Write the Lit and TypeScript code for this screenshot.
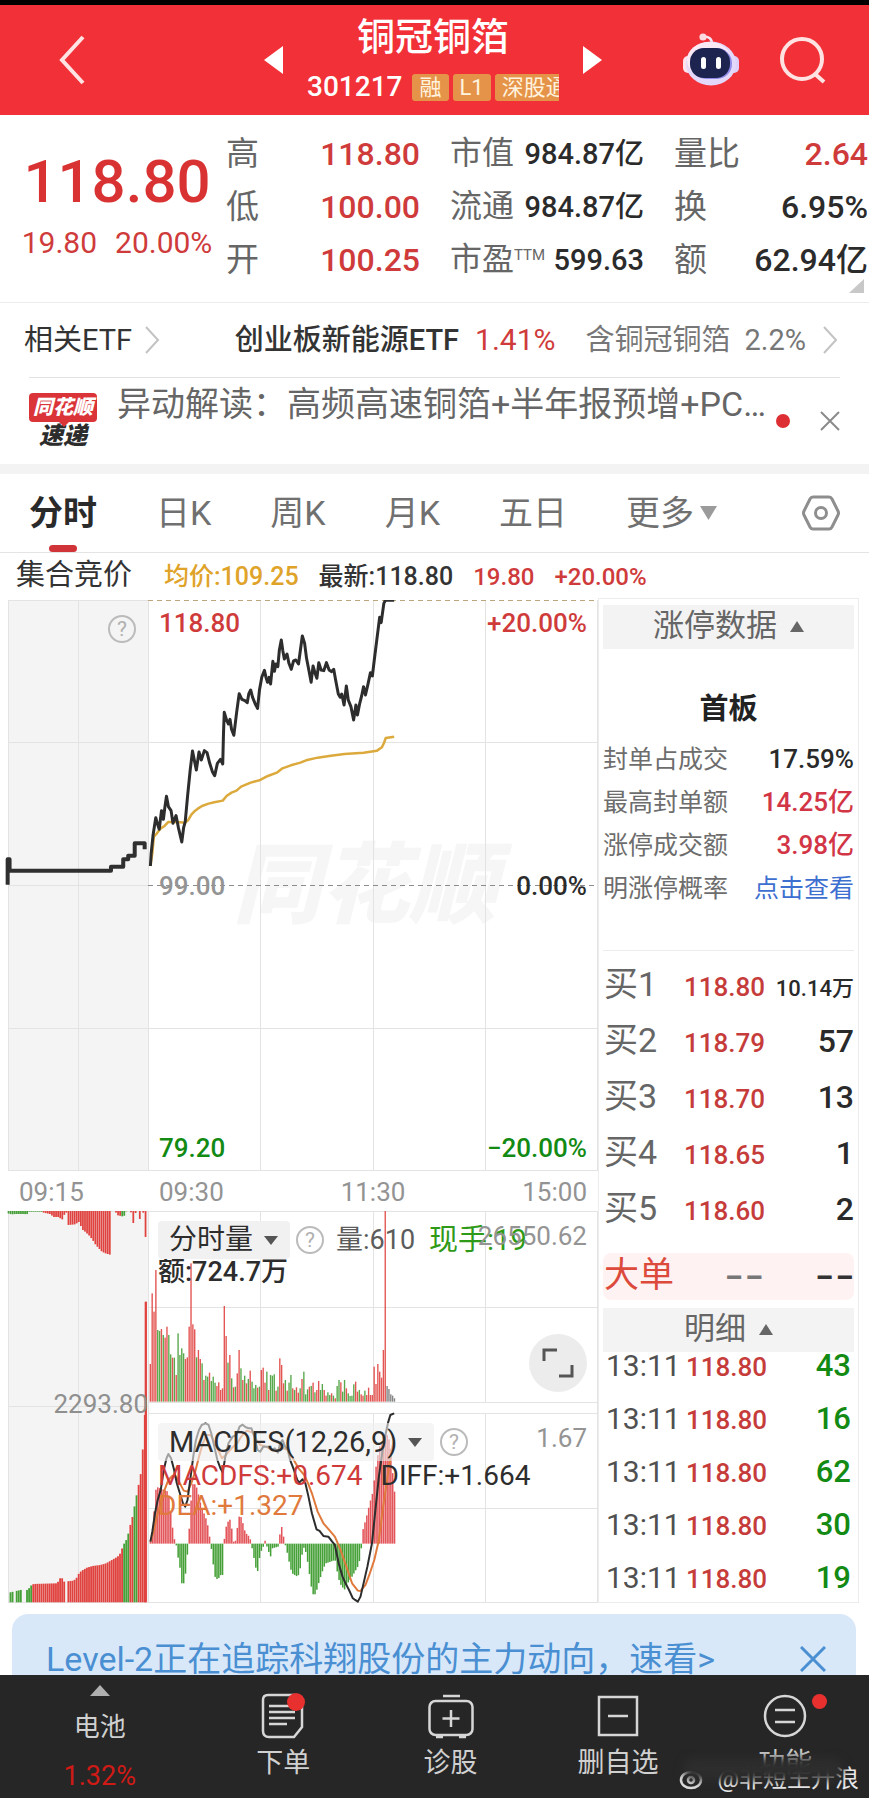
import { LitElement, html, svg, css } from "lit";
import { customElement, state } from "lit/decorators.js";

type Pt = [number, number];

const parse = (s: string): Pt[] =>
  s.trim().split(/\s+/).map((p) => p.split(",").map(Number) as Pt);

const at = (pts: Pt[], x: number): number => {
  for (let i = 1; i < pts.length; i++) {
    const [x0, y0] = pts[i - 1];
    const [x1, y1] = pts[i];
    if (x <= x1) return y0 + ((y1 - y0) * (x - x0)) / (x1 - x0);
  }
  return pts[pts.length - 1][1];
};

const PRICE = `393,828 395,790 400,735 407,683 411,700 416,718 422,662 427,688 431,650 435,619 440,650 447,662 452,700 460,677 466,712 475,756 480,712 484,695 490,620 497,540 503,483 508,512 513,540 520,486 526,510 534,482 541,488 548,520 555,545 561,557 568,520 576,508 582,522 584,430 586,367 592,390 597,402 601,388 605,418 611,436 618,370 625,311 632,328 640,332 646,338 650,312 655,300 660,322 667,342 673,355 678,300 684,262 691,241 695,262 699,277 703,262 707,282 713,214 717,244 721,222 726,230 730,180 735,150 739,182 743,207 750,192 755,220 761,238 767,213 773,210 780,222 785,180 790,138 796,160 801,205 807,240 813,277 818,228 823,248 828,265 833,218 839,240 846,242 853,218 860,240 866,245 872,238 877,270 884,312 889,322 893,312 899,345 905,288 910,330 917,350 924,390 930,345 934,375 940,340 945,318 950,290 955,315 962,280 968,248 973,258 978,210 984,155 992,82 996,98 1003,40 1007,31 1030,31`;
const AVERAGE = `393,828 398,790 402,740 410,730 420,715 430,708 440,696 455,696 470,697 484,698 492,690 500,674 508,664 517,656 528,648 545,641 560,637 582,632 592,618 605,608 618,602 630,590 655,578 680,570 700,558 725,547 738,535 760,526 785,518 800,511 830,503 860,498 900,492 950,488 985,482 998,472 1003,460 1008,444 1030,440`;
const AUCTION = `20,884 20,808 25,808 25,842 290,842 290,830 322,830 322,808 335,808 335,797 352,797 352,760 378,760 378,778`;

const VOLUME = `492r 280r 335r 210r 390g 393g 387r 405g 413r 380r 405g 463g 473r 473g 525r 400g 465g 445g 460g 477r 472r 380r 190r 373r 388r 472g 450r 477r 490g 540r 527g 530g 518r 543g 530g 548g 558r 547r 570r 565r 318r 408r 488g 465r 535g 562r 560g 520r 450r 505g 540r 527g 550r 537g 512r 545g 565g 555g 563r 560g 510r 503r 548r 515g 570r 525g 527g 523g 572r 560g 475r 495r 550r 540g 572r 548g 525g 565r 570g 562r 578r 565g 537r 515g 583g 568g 560r 558g 548r 577g 570r 543r 570g 552g 570r 587r 577g 585g 580r 587g 595r 558g 540g 547r 575g 540g 565r 580g 588g 587g 553g 545r 575r 570g 583r 587r 572g 585r 563r 585r 585r 500r 552r 492r 515r 533r 450r 33r 558k 567k 583k 587k 595k`.split(" ");

const HANG = parse(`20,7 30,10 41,9 52,9 63,9 70,10 76,2 108,2 114,5 130,9 142,19 150,17 165,27 169,5 174,5 178,42 196,40 207,32 214,55 222,62 234,75 243,89 250,102 258,112 266,122 275,127 290,132 292,0 302,0 304,12 312,14 322,17 328,10 330,0`);
const LADDER = parse(`25,1144 52,1137 70,1137 80,1122 86,1119 148,1117 152,1102 160,1102 165,1112 190,1109 197,1102 203,1089 210,1080 225,1070 240,1065 260,1062 275,1057 290,1047 305,1037 312,1027 320,1002 330,982 337,947 345,912 352,867 358,832 365,792 370,727 376,612`);
const HIST = parse(`393,425 398,395 403,330 407,270 412,262 440,275 445,320 450,375 455,415 460,431 465,470 470,500 475,550 480,550 485,520 490,460 492,431 494,395 500,290 505,245 515,265 520,290 527,325 535,345 541,365 546,395 550,431 553,450 558,500 563,537 570,537 577,525 582,525 585,440 587,405 592,375 600,355 605,380 610,425 615,425 620,385 625,350 632,352 637,385 643,400 653,412 656,430 658,440 663,470 668,500 672,525 677,480 682,455 688,440 692,420 697,438 702,455 707,470 712,445 727,440 731,405 736,380 741,410 744,428 748,445 753,470 758,500 763,520 777,530 783,520 788,470 795,440 800,460 806,500 812,550 817,583 825,583 830,560 838,530 845,505 852,490 876,480 882,520 888,550 900,570 905,555 915,540 925,520 935,500 940,480 944,445 947,395 953,370 960,340 967,305 972,290 978,240 985,180 992,140 1000,115 1008,100 1015,110 1022,150 1028,250 1031,275`);
const DIFF = `393,425 398,395 405,340 412,300 420,270 428,210 435,175 440,162 447,175 455,210 462,250 470,280 478,310 484,320 490,300 497,240 505,170 512,120 520,90 527,75 537,70 545,75 552,100 560,140 568,180 576,205 582,218 588,175 597,130 608,110 618,105 626,80 634,74 642,82 650,85 657,85 665,110 673,150 680,155 688,140 700,140 710,150 718,145 726,158 732,130 738,120 745,140 752,150 758,180 768,210 777,240 782,248 790,238 798,250 806,290 815,340 827,388 835,393 845,408 858,410 868,425 875,435 885,490 895,530 902,548 912,570 922,595 928,600 935,605 942,590 948,560 960,500 972,430 980,340 990,230 1000,150 1008,100 1014,68 1020,45 1030,40`;
const DEA = `393,425 400,400 410,350 420,310 430,270 440,240 450,228 460,230 470,250 480,272 490,275 500,250 510,215 520,170 530,130 540,105 550,105 560,125 570,150 580,175 590,165 605,145 620,130 630,110 645,92 660,98 670,120 680,135 695,140 710,150 725,150 740,145 752,150 765,175 780,205 795,225 805,250 815,280 830,335 845,370 860,390 875,410 890,450 905,500 920,550 935,572 942,573 955,555 965,525 978,480 990,420 1000,330 1010,250 1018,190 1025,140 1030,120`;

const RED = "#e0433f";
const GREEN = "#46a038";

const shared = css`
  :host { display: block; }
  * { box-sizing: border-box; }
  button { font: inherit; color: inherit; background: none; border: 0; padding: 0; margin: 0; cursor: pointer; }
  a { color: inherit; text-decoration: none; }
  svg { display: block; }
  .red { color: #cf3b3b; }
  .green { color: #138a13; }
`;

@customElement("stock-header")
class StockHeader extends LitElement {
  static styles = [shared, css`
    header { display: grid; grid-template-columns: 1fr auto 1fr; align-items: stretch; height: 115px; background: #f23038; border-top: 5px solid #050000; color: #fff; }
    .side { display: flex; align-items: center; }
    .left { padding-left: 58px; }
    .right { justify-content: flex-end; gap: 40px; padding-right: 42px; }
    .mid { display: flex; align-items: center; justify-content: space-between; width: 338px; margin-right: 3px; }
    .name { display: flex; flex-direction: column; align-items: center; justify-content: flex-start; width: 252px; height: 110px; padding-top: 10px; }
    h1 { margin: 0; font-size: 38px; line-height: 44px; font-weight: 500; }
    .sub { display: flex; align-items: center; gap: 4px; width: 100%; height: 56px; overflow: hidden; white-space: nowrap; }
    .code { font-size: 28px; line-height: 32px; margin-right: 6px; font-weight: 500; }
    .tag { flex: none; background: #e6934a; color: #fff3df; font-size: 22px; line-height: 27px; padding: 0 7px; border-radius: 3px; }
  `];
  render() {
    return html`<header>
      <div class="side left">
        <button aria-label="返回"><svg width="28" height="50" viewBox="0 0 28 50"><path d="M25 2 4 25 25 48" fill="none" stroke="#ffe3e3" stroke-width="4"/></svg></button>
      </div>
      <div class="mid">
        <button aria-label="上一只"><svg width="19" height="28"><path d="M19 0v28L0 14z" fill="#fff"/></svg></button>
        <div class="name">
          <h1>铜冠铜箔</h1>
          <div class="sub"><span class="code">301217</span><span class="tag">融</span><span class="tag">L1</span><span class="tag">深股通</span></div>
        </div>
        <button aria-label="下一只"><svg width="19" height="28"><path d="M0 0v28l19-14z" fill="#fff"/></svg></button>
      </div>
      <div class="side right">
        <button aria-label="智能助手">
          <svg width="58" height="54" viewBox="0 0 58 54">
            <path d="M21 4c6-1 9 2 9 7" fill="none" stroke="#f3e6f4" stroke-width="2.5"/><circle cx="21" cy="4" r="3.6" fill="#ffd9e2"/>
            <rect x="1" y="23" width="10" height="17" rx="5" fill="#ffe4ee"/><rect x="47" y="23" width="10" height="17" rx="5" fill="#ddd0fb"/>
            <ellipse cx="29" cy="30.500" rx="25" ry="22" fill="#e4d8fa"/>
            <ellipse cx="27" cy="27" rx="22" ry="18" fill="#fbeaf6"/>
            <rect x="9" y="15" width="41" height="31" rx="15" fill="#8f8be8"/>
            <rect x="8" y="15" width="40" height="30" rx="14" fill="#1d2450"/>
            <rect x="19" y="24" width="5" height="12" rx="2.500" fill="#fff"/><rect x="34" y="24" width="5" height="12" rx="2.500" fill="#fff"/>
          </svg>
        </button>
        <button aria-label="搜索"><svg width="47" height="47" viewBox="0 0 47 47"><circle cx="22" cy="22" r="20" fill="none" stroke="#ffe3e3" stroke-width="4"/><path d="m35 37 9 8" stroke="#ffe3e3" stroke-width="4"/></svg></button>
      </div>
    </header>`;
  }
}

@customElement("stock-stats")
class StockStats extends LitElement {
  static styles = [shared, css`
    .stats { display: flex; padding-right: 1px; height: 188px; border-bottom: 1px solid #ececec; position: relative; }
    .quote { width: 226px; padding: 32px 10px 0 18px; text-align: center; color: #d93232; }
    .price { font-size: 60px; line-height: 70px; font-weight: 500; }
    .chg { display: flex; justify-content: center; gap: 18px; font-size: 30px; line-height: 52px; color: #cf3b3b; }
    .cols { flex: 1; display: grid; grid-template-columns: repeat(3, 1fr); column-gap: 30px; padding-top: 12px; align-content: start; }
    .cell { display: flex; justify-content: space-between; align-items: baseline; height: 53px; line-height: 53px; white-space: nowrap; font-size: 32px; font-weight: 500; color: #2b2b2b; }
    .cell.small { font-size: 29px; }
    .cell .k { font-size: 33px; font-weight: 400; color: #666; display: flex; }
    .small .k { font-size: 32px; }
    .cell sup { font-size: 15px; line-height: 44px; }
    .cell.red { color: #cf3b3b; }
    .corner { position: absolute; right: 5px; bottom: 9px; }
  `];
  render() {
    const cell = (k: unknown, v: string, cls = "") =>
      html`<div class="cell ${cls}"><span class="k">${k}</span><span>${v}</span></div>`;
    return html`<section class="stats">
      <div class="quote"><div class="price">118.80</div><div class="chg"><span>19.80</span><span>20.00%</span></div></div>
      <div class="cols">
        ${cell("高", "118.80", "red")}${cell("市值", "984.87亿", "small")}${cell("量比", "2.64", "red")}
        ${cell("低", "100.00", "red")}${cell("流通", "984.87亿", "small")}${cell("换", "6.95%")}
        ${cell("开", "100.25", "red")}${cell(html`市盈<sup>TTM</sup>`, "599.63", "small")}${cell("额", "62.94亿")}
      </div>
      <svg class="corner" width="15" height="14"><path d="M15 0v14H0z" fill="#c8c8c8"/></svg>
    </section>`;
  }
}

@customElement("stock-news")
class StockNews extends LitElement {
  static styles = [shared, css`
    .etf { display: flex; align-items: center; height: 74px; line-height: 74px; padding: 0 31px 0 24px; font-size: 29px; color: #333; white-space: nowrap; }
    .related { display: flex; align-items: center; gap: 12px; }
    .fund { display: flex; align-items: center; margin-left: auto; }
    .fund b { font-weight: 500; margin-right: 16px; }
    .fund .red { font-size: 30px; margin-right: 30px; }
    .fund .has { color: #777; margin-right: 16px; display: flex; gap: 14px; }
    .news { display: flex; align-items: center; height: 87px; margin: 0 29px; border-top: 1px solid #e2e2e2; }
    .logo { width: 68px; margin: 0 20px 0 0; padding-top: 2px; }
    .logo .top { position: relative; background: #da3338; color: #fff; font-size: 20px; line-height: 29px; font-weight: 900; font-style: italic; text-align: center; border-radius: 4px; }
    .logo .top::after { content: ""; position: absolute; left: 30px; top: 29px; border: 5px solid transparent; border-top-color: #da3338; }
    .logo .bot { color: #2c2c2c; font-size: 24px; line-height: 29px; font-weight: 900; font-style: italic; text-align: center; }
    .text { flex: 1; min-width: 0; font-size: 34px; line-height: 48px; color: #666; overflow: hidden; text-overflow: ellipsis; white-space: nowrap; margin-bottom: 34px; }
    .dot { width: 14px; height: 14px; border-radius: 50%; background: #dd2f33; margin: 0 30px 0 8px; }
    .gap { height: 10px; background: #f3f3f3; }
  `];
  render() {
    const arrow = html`<svg width="16" height="28" viewBox="0 0 16 28"><path d="M2 1 14 14 2 27" fill="none" stroke="#c3c3c3" stroke-width="2"/></svg>`;
    return html`
      <div class="etf">
        <a class="related" href="#etf">相关ETF ${arrow}</a>
        <a class="fund" href="#fund"><b>创业板新能源ETF</b><span class="red">1.41%</span><span class="has"><span>含铜冠铜箔</span><span>2.2%</span></span>${arrow}</a>
      </div>
      <div class="news">
        <div class="logo"><div class="top">同花顺</div><div class="bot">速递</div></div>
        <a class="text" href="#news">异动解读：高频高速铜箔+半年报预增+PC...</a>
        <span class="dot"></span>
        <button aria-label="关闭"><svg width="20" height="20"><path d="m1 1 18 18M19 1 1 19" stroke="#8a8a8a" stroke-width="2"/></svg></button>
      </div>
      <div class="gap"></div>`;
  }
}

@customElement("chart-tabs")
class ChartTabs extends LitElement {
  static styles = [shared, css`
    nav { display: flex; align-items: center; height: 79px; padding: 0 29px; border-bottom: 1px solid #e4e4e4; font-size: 34px; color: #707070; }
    button { position: relative; display: flex; align-items: center; height: 78px; line-height: 78px; margin-right: 59px; white-space: nowrap; }
    button.on { color: #2a2a2a; font-weight: 700; }
    button.on::after { content: ""; position: absolute; left: 50%; bottom: 0; width: 28px; height: 7px; margin-left: -14px; border-radius: 4px; background: #d03438; }
    .more { gap: 6px; }
    .set { margin: 0 0 0 auto; }
    .info { display: flex; height: 45px; line-height: 45px; align-items: baseline; padding-left: 16px; font-size: 25px; font-weight: 500; color: #333; white-space: nowrap; }
    .info .auc { font-size: 29px; font-weight: 400; margin-right: 32px; }
    .info .avg { color: #dfa32a; margin-right: 20px; }
    .info .red { font-size: 24px; margin-left: 20px; }
  `];
  @state() active = 0;
  render() {
    const tabs = ["分时", "日K", "周K", "月K", "五日"];
    return html`<nav>
      ${tabs.map((t, i) => html`<button class=${i === this.active ? "on" : ""} @click=${() => (this.active = i)}>${t}</button>`)}
      <button class="more">更多<svg width="17" height="14"><path d="M0 0h17L8.500 14z" fill="#9b9b9b"/></svg></button>
      <button class="set" aria-label="设置"><svg width="38" height="36" viewBox="0 0 38 36"><path d="M11 2h16q2 0 3 2l6 12q1 2 0 4l-6 12q-1 2-3 2H11q-2 0-3-2L2 20q-1-2 0-4L8 4q1-2 3-2z" fill="none" stroke="#8e8e8e" stroke-width="3"/><circle cx="19" cy="18" r="5.500" fill="none" stroke="#8e8e8e" stroke-width="3"/></svg></button>
    </nav>
    <div class="info"><span class="auc">集合竞价</span><span class="avg">均价:109.25</span><span>最新:118.80</span><span class="red">19.80</span><span class="red">+20.00%</span></div>`;
  }
}

@customElement("intraday-chart")
class IntradayChart extends LitElement {
  static styles = [shared, css`
    :host { padding-top: 2px; font-size: 26px; font-weight: 500; }
    .plot { display: grid; grid-template-columns: 148fr 450fr; }
    .plot > svg { grid-area: 1 / 1 / 2 / 3; width: 100%; }
    .pre { grid-area: 1 / 1; display: flex; justify-content: flex-end; padding: 15px 12px 0 0; }
    .labels { grid-area: 1 / 2; display: grid; grid-template-columns: 1fr 1fr; align-content: space-between; padding: 8px 11px 8px 11px; line-height: 30px; z-index: 1; }
    .labels :nth-child(even) { text-align: right; }
    .grey { color: #949494; }
    .mark { grid-area: 1 / 2; place-self: center; padding-right: 16px; font-size: 88px; line-height: 90px; font-weight: 900; font-style: italic; color: #f6f6f6; }
    .times { display: grid; grid-template-columns: 148fr 450fr; height: 40px; line-height: 42px; color: #939393; font-weight: 400; }
    .times > :first-child { padding-left: 19px; }
    .times div { display: flex; justify-content: space-between; padding: 0 11px; }
    .q { display: block; width: 28px; height: 28px; border: 2px solid #bbb; border-radius: 50%; color: #b0b0b0; font-size: 21px; line-height: 24px; text-align: center; font-weight: 400; }
    .mid { grid-area: 1 / 1; display: flex; justify-content: flex-end; align-items: center; padding-bottom: 6px; color: #8f8f8f; font-weight: 400; z-index: 1; }
    .subs { grid-area: 1 / 2; position: relative; padding: 10px 11px 0 10px; z-index: 1; font-weight: 400; white-space: nowrap; }
    .line { display: flex; align-items: center; height: 38px; line-height: 38px; }
    .sel { position: relative; display: flex; align-items: center; height: 38px; background: rgba(238, 238, 238, 0.6); border-radius: 4px; margin-right: 6px; }
    .sel.solid { background: #f1f1f1; }
    .sel select { appearance: none; border: 0; background: transparent; font: inherit; font-size: 28px; color: #2d2d2d; padding: 0 36px 0 11px; height: 38px; margin: 0; }
    .sel.wide select { font-size: 29px; }
    .sel svg { position: absolute; right: 12px; pointer-events: none; }
    .vol { font-size: 27px; color: #5c5c5c; margin-left: 12px; }
    .now { font-size: 29px; color: #2f9a17; margin-left: 14px; }
    .max { position: absolute; right: 11px; top: 10px; line-height: 30px; color: #949494; }
    .amt { font-size: 27px; line-height: 26px; color: #2d2d2d; font-weight: 500; }
    .full { position: absolute; right: 11px; top: 123px; width: 58px; height: 58px; border-radius: 50%; background: #ececec; display: grid; place-items: center; }
    .macd { position: absolute; left: 10px; right: 11px; top: 212px; font-size: 28px; }
    .macd .val { position: absolute; right: 0; top: 0; font-size: 26px; line-height: 30px; color: #949494; }
    .macd .row { line-height: 30px; color: #2d2d2d; display: flex; gap: 18px; }
    .macd .row.dea { color: #e07a3c; }
    .grid { stroke: #e3e3e3; stroke-width: 1; fill: none; vector-effect: non-scaling-stroke; }
    .ln { fill: none; vector-effect: non-scaling-stroke; stroke-linejoin: round; }
  `];

  private bars() {
    const step = 638 / (VOLUME.length - 1);
    const color: Record<string, string> = { r: RED, g: GREEN, k: "#777" };
    const out = [];
    VOLUME.forEach((v, i) => {
      const y = parseInt(v, 10) - 33;
      out.push(svg`<rect x=${391 + i * step} y=${y} width="3.6" height=${572 - y} fill=${color[v.slice(-1)]} opacity=".9"/>`);
    });
    for (let i = 0; i < VOLUME.length; i++) {
      const x = 393 + i * step;
      const y = at(HIST, x);
      out.push(svg`<rect x=${x - 2} y=${Math.min(y, 431) + 567} width="4" height=${Math.abs(431 - y)} fill=${y < 431 ? "#e3555a" : GREEN}/>`);
    }
    for (let x = 20; x < 330; x += 5.4) {
      const h = at(HANG, x + 2);
      if (h > 0) out.push(svg`<rect x=${x} y="0" width="4.6" height=${h} fill=${x < 108 || x > 316 ? GREEN : RED}/>`);
    }
    for (const [x, h] of [[340, 4], [346, 36], [352, 6], [363, 24], [372, 5], [378, 78]]) {
      out.push(svg`<rect x=${x} y="0" width="4.6" height=${h} fill=${RED}/>`);
    }
    for (let x = 25; x < 376; x += 5.4) {
      if ((x > 34 && x < 40) || (x > 55 && x < 63) || (x > 168 && x < 174)) continue;
      const y = at(LADDER, x);
      const green = x < 82 || (x > 318 && x < 336) || (x > 345 && x < 356);
      out.push(svg`<rect x=${x} y=${y} width="4.8" height=${1174 - y} fill=${green ? GREEN : RED}/>`);
    }
    out.push(svg`<rect x="378" y="272" width="6" height="902" fill=${RED}/>`);
    return out;
  }

  render() {
    const cols = [78, 148, 260, 373, 485];
    const tri = html`<svg width="14" height="9"><path d="M0 0h14L7 9z" fill="#555"/></svg>`;
    return html`
      <div class="plot">
        <svg height="571" viewBox="0 0 598 571" preserveAspectRatio="none">
          <rect x="8" y="0" width="140" height="571" fill="#f4f4f4"/>
        </svg>
        <div class="mark">同花顺</div>
        <svg height="571" viewBox="0 0 598 571" preserveAspectRatio="none">
          <path class="grid" d="M8.500.5V571M8 .5h140M8 142.500h589M8 285.500h140M8 428.500h589M8 570.500h589M597.500 0v571"/>
          ${cols.map((x) => svg`<path class="grid" d="M${x + 0.5} 0V571"/>`)}
          <path class="ln" d="M148 .5h449" stroke="#bda57c" stroke-dasharray="5 4"/>
          <path class="ln" d="M148 285.500h449" stroke="#8c8c8c" stroke-dasharray="5 4"/>
          <g transform="scale(.3827 .3333) translate(0 -30)">
            <polyline class="ln" points=${AVERAGE} stroke="#dca93c" stroke-width="2.5"/>
            <polyline class="ln" points=${AUCTION} stroke="#2f2f2f" stroke-width="4"/>
            <polyline class="ln" points=${PRICE} stroke="#2d2d2d" stroke-width="3"/>
          </g>
        </svg>
        <div class="pre"><button class="q" aria-label="说明">?</button></div>
        <div class="labels">
          <span class="red">118.80</span><span class="red">+20.00%</span>
          <span class="grey">99.00</span><span>0.00%</span>
          <span class="green">79.20</span><span class="green">−20.00%</span>
        </div>
      </div>
      <div class="times"><span>09:15</span><div><span>09:30</span><span>11:30</span><span>15:00</span></div></div>
      <div class="plot">
        <svg height="392" viewBox="0 0 598 392" preserveAspectRatio="none">
          <rect x="8" y="0" width="140" height="391" fill="#f4f4f4"/>
          <path class="grid" d="M8 .5h589M148 96.500h449M148 191.500h449M148 202.500h449M148 297.500h449M8 391.500h589M8 195.500h140M8.500 0v392M597.500 0v392"/>
          ${cols.map((x) => svg`<path class="grid" d="M${x + 0.5} 0V392"/>`)}
          <rect x="149" y="192" width="448" height="10" fill="#fff"/>
          <g transform="scale(.3827 .3333)">
            ${this.bars()}
            <g transform="translate(0 567)">
              <polyline class="ln" points=${DEA} stroke="#e07a3c" stroke-width="2"/>
              <polyline class="ln" points=${DIFF} stroke="#2d2d2d" stroke-width="2"/>
            </g>
          </g>
        </svg>
        <div class="mid">2293.80</div>
        <div class="subs">
          <div class="line">
            <label class="sel solid"><select aria-label="副图指标一"><option>分时量</option></select>${tri}</label>
            <button class="q" aria-label="说明">?</button>
            <span class="vol">量:610</span><span class="now">现手:19</span>
          </div>
          <div class="amt">额:724.7万</div>
          <span class="max">26550.62</span>
          <button class="full" aria-label="全屏"><svg width="32" height="30"><path d="M2 13V2h13M17 28h13V17" fill="none" stroke="#555" stroke-width="3"/></svg></button>
          <div class="macd">
            <div class="line">
              <label class="sel wide"><select aria-label="副图指标二"><option>MACDFS(12,26,9)</option></select>${tri}</label>
              <button class="q" aria-label="说明">?</button>
            </div>
            <span class="val">1.67</span>
            <div class="row"><span class="red">MACDFS:+0.674</span><span>DIFF:+1.664</span></div>
            <div class="row dea">DEA:+1.327</div>
          </div>
        </div>
      </div>`;
  }
}

@customElement("order-panel")
class OrderPanel extends LitElement {
  static styles = [shared, css`
    aside { height: 100%; padding: 6px 4px 10px; border: 1px solid #ececec; display: flex; flex-direction: column; white-space: nowrap; }
    .head { display: flex; align-items: center; justify-content: center; gap: 13px; height: 44px; line-height: 42px; padding-bottom: 2px; width: 100%; background: #f3f3f3; font-size: 31px; color: #666; }
    h2 { margin: 40px 0 9px; font-size: 29px; line-height: 40px; text-align: center; color: #222; }
    .row { display: flex; justify-content: space-between; align-items: baseline; height: 43px; line-height: 43px; font-size: 25px; color: #6d6d6d; }
    .row b { font-size: 26px; font-weight: 500; color: #2a2a2a; }
    .row b.red { color: #d23545; }
    .row a { color: #3d6fd0; }
    hr { width: 100%; border: 0; border-top: 1px solid #ececec; margin: 40px 0 5px; }
    .buy { display: grid; grid-template-columns: 80px auto 1fr; align-items: baseline; height: 56px; line-height: 56px; padding-left: 1px; font-size: 34px; color: #666; }
    .buy .p { font-size: 26px; font-weight: 500; color: #c63c3a; }
    .buy .v { text-align: right; font-size: 32px; font-weight: 500; color: #2a2a2a; }
    .buy .v.s { font-size: 22px; }
    .big { display: grid; grid-template-columns: 1fr auto auto; column-gap: 50px; align-items: center; height: 47px; line-height: 45px; padding: 0 1px 2px; margin: 17px 0 8px; border-radius: 8px; background: #fff2f2; font-size: 35px; color: #dc4a3c; }
    .big .d { font-family: Inter, sans-serif; font-size: 44px; color: #777; }
    .big .d.k { color: #333; }
    .tick { display: grid; grid-template-columns: 80px auto 1fr; align-items: baseline; height: 28px; line-height: 28px; margin-bottom: 25px; padding: 0 3px; font-size: 30px; color: #505050; }
    .tick .p { font-size: 26px; font-weight: 500; color: #c63c3a; }
    .tick .v { text-align: right; font-size: 31px; font-weight: 500; color: #138a13; }
    .tick:last-child { margin-bottom: 0; }
  `];
  render() {
    const up = html`<svg width="14" height="11"><path d="M0 11h14L7 0z" fill="#666"/></svg>`;
    const buys = [["118.80", "10.14万"], ["118.79", "57"], ["118.70", "13"], ["118.65", "1"], ["118.60", "2"]];
    return html`<aside>
      <button class="head">涨停数据 ${up}</button>
      <h2>首板</h2>
      <div class="row">封单占成交<b>17.59%</b></div>
      <div class="row">最高封单额<b class="red">14.25亿</b></div>
      <div class="row">涨停成交额<b class="red">3.98亿</b></div>
      <div class="row">明涨停概率<a href="#odds">点击查看</a></div>
      <hr>
      ${buys.map(([p, v], i) => html`<div class="buy"><span>买${i + 1}</span><span class="p">${p}</span><span class="v ${i ? "" : "s"}">${v}</span></div>`)}
      <div class="big"><span>大单</span><span class="d">--</span><span class="d k">--</span></div>
      <button class="head">明细 ${up}</button>
      ${[43, 16, 62, 30, 19].map((v) => html`<div class="tick"><span>13:11</span><span class="p">118.80</span><span class="v">${v}</span></div>`)}
    </aside>`;
  }
}

@customElement("bottom-bar")
class BottomBar extends LitElement {
  static styles = [shared, css`
    nav { position: relative; display: grid; grid-template-columns: 199fr repeat(4, 167fr); height: 123px; background: #262626; color: #d0d0d0; font-size: 27px; }
    button { display: flex; flex-direction: column; align-items: center; justify-content: flex-start; padding-top: 17px; line-height: 34px; }
    .ico { position: relative; display: grid; place-items: center; width: 48px; height: 48px; margin-bottom: 6px; }
    .ico.dot::after { content: ""; position: absolute; right: 2px; top: 1px; width: 18px; height: 18px; border-radius: 50%; background: #e8302f; }
    .ico.out::after { right: -18px; top: 2px; width: 15px; height: 15px; }
    .sector { padding-top: 10px; font-size: 26px; }
    .sector svg { margin-bottom: 14px; }
    .sector .pct { font-size: 27px; margin-top: 15px; color: #cf1a16; }
    .mark { position: absolute; right: 10px; bottom: 5px; display: flex; align-items: center; gap: 12px; font-size: 24px; line-height: 28px; color: #e8e8e8; }
    .smudge { position: absolute; right: 26px; bottom: 18px; width: 160px; height: 22px; background: #2d2d2d; border-radius: 12px; filter: blur(4px); }
  `];
  render() {
    const s = (body: unknown) => html`<svg width="46" height="46" viewBox="0 0 46 46" fill="none" stroke="#d6d6d6" stroke-width="2.5">${body}</svg>`;
    return html`<nav>
      <button class="sector"><svg width="20" height="11"><path d="M0 11h20L10 0z" fill="#b0b0b0"/></svg><span>电池</span><span class="pct">1.32%</span></button>
      <button><span class="ico dot">${s(svg`<path d="M8 2h26q8 0 8 6v26L34 44H9q-6 0-6-6V7q0-5 5-5z"/><path d="M9 13h20M9 19h26M9 25h26M9 31h18"/>`)}</span>下单</button>
      <button><span class="ico">${s(svg`<path d="M15 3h17"/><rect x="1.500" y="8" width="43" height="34" rx="6"/><path d="M23 17v17M14.500 25.500h17M8 44h7M31 44h7"/>`)}</span>诊股</button>
      <button><span class="ico">${s(svg`<rect x="4" y="4" width="38" height="38"/><path d="M13 23h20"/>`)}</span>删自选</button>
      <button><span class="ico dot out">${s(svg`<circle cx="23" cy="23" r="20"/><path d="M13 17h20M13 29h20"/>`)}</span>功能</button>
      <div class="mark"><svg width="26" height="22" viewBox="0 0 26 22" fill="none" stroke="#ddd" stroke-width="2.500"><ellipse cx="12" cy="12" rx="10" ry="8"/><circle cx="12" cy="12" r="3"/></svg><span>@非短王升浪</span></div>
      <div class="smudge"></div>
    </nav>`;
  }
}

@customElement("app-root")
class AppRoot extends LitElement {
  static styles = [shared, css`
    :host { background: #fff; font-family: Roboto, "Noto Sans CJK SC", sans-serif; color: #2b2b2b; overflow: hidden; }
    main { display: grid; grid-template-columns: minmax(0, 1fr) 261px; padding-right: 10px; }
    .banner { display: flex; align-items: center; justify-content: space-between; margin: 11px 13px 0 12px; height: 61px; padding: 28px 30px 0 34px; border-radius: 16px 16px 0 0; background: #d9e8f9; overflow: hidden; font-size: 34px; color: #4a8fd2; white-space: nowrap; }
    .banner a { line-height: 34px; }
  `];
  render() {
    return html`
      <stock-header></stock-header>
      <stock-stats></stock-stats>
      <stock-news></stock-news>
      <chart-tabs></chart-tabs>
      <main><intraday-chart></intraday-chart><order-panel></order-panel></main>
      <div class="banner"><a href="#level2">Level-2正在追踪科翔股份的主力动向，速看&gt;</a>
        <button aria-label="关闭"><svg width="26" height="26"><path d="m1 1 24 24M25 1 1 25" stroke="#4a8fd2" stroke-width="3"/></svg></button></div>
      <bottom-bar></bottom-bar>`;
  }
}
